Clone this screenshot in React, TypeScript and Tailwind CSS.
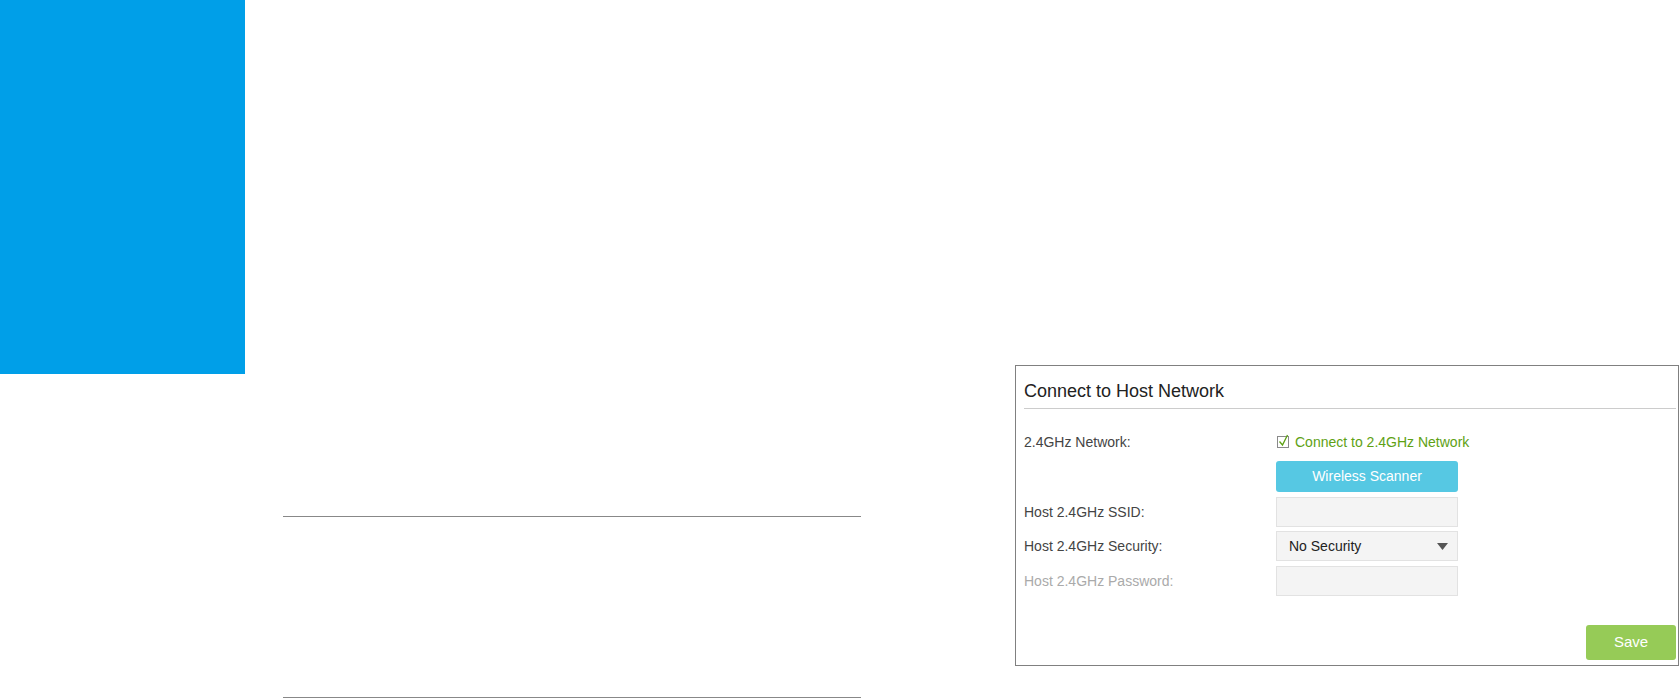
import React from "react";

const font = { fontFamily: '"Liberation Sans", Arial, sans-serif' };

function Field({ children }: { children?: React.ReactNode }) {
  return (
    <div className="h-[30px] w-[182px] border border-[#e2e2e2] bg-[#f4f4f4] flex items-center">
      {children}
    </div>
  );
}

export default function App() {
  return (
    <div className="flex h-[698px] w-[1679px] overflow-hidden bg-white" style={font}>
      <div className="w-[245px] shrink-0">
        <div className="h-[374px] bg-[#009fe8]" />
      </div>
      <div className="ml-[38px] w-[578px] shrink-0 pt-[516px]">
        <div className="h-px bg-[#888888]" />
        <div className="h-[180px]" />
        <div className="h-px bg-[#888888]" />
      </div>
      <div className="ml-[154px] shrink-0 pt-[365px]">
        <div className="flex h-[301px] w-[664px] flex-col border border-[#808080] pl-[8px] pr-[2px] pb-[5px] pt-[13px]">
          <div className="border-b border-[#cccccc] pb-[5px] text-[18px] leading-[24px] text-[#222222]">
            Connect to Host Network
          </div>
          <div className="mt-[23px] flex h-[20px] items-center text-[14px] text-[#444444]">
            <div className="w-[252px] shrink-0">2.4GHz Network:</div>
            <div className="ml-px flex items-center text-[#5ea114]">
              <svg width="13" height="14" viewBox="0 0 13 14" className="mr-[5px] -mt-[2px]">
                <rect x="0.5" y="2.5" width="11" height="11" fill="none" stroke="#8a8a8a" />
                <path d="M2.5 7.5 L5.5 11 L10.5 1" fill="none" stroke="#5ea114" strokeWidth="1.3" />
              </svg>
              Connect to 2.4GHz Network
            </div>
          </div>
          <div className="mt-[9px] ml-[252px] flex h-[31px] w-[182px] items-center justify-center rounded-[3px] bg-[#56c8e3] text-[14px] text-white">
            Wireless Scanner
          </div>
          <div className="mt-[5px] flex items-center text-[14px] text-[#444444]">
            <div className="w-[252px] shrink-0">Host 2.4GHz SSID:</div>
            <Field />
          </div>
          <div className="mt-[4px] flex items-center text-[14px] text-[#444444]">
            <div className="w-[252px] shrink-0">Host 2.4GHz Security:</div>
            <Field>
              <div className="flex w-full items-center justify-between pl-[12px] pr-[9px] text-[14px] text-[#222222]">
                <span>No Security</span>
                <svg width="11" height="7" viewBox="0 0 11 7">
                  <path d="M0 0 H11 L5.5 7 Z" fill="#555555" />
                </svg>
              </div>
            </Field>
          </div>
          <div className="mt-[5px] flex items-center text-[14px] text-[#aaaaaa]">
            <div className="w-[252px] shrink-0">Host 2.4GHz Password:</div>
            <Field />
          </div>
          <div className="mt-auto flex justify-end">
            <div className="flex h-[35px] w-[90px] items-center justify-center rounded-[3px] bg-[#96cb57] text-[15px] text-white">
              Save
            </div>
          </div>
        </div>
      </div>
    </div>
  );
}
